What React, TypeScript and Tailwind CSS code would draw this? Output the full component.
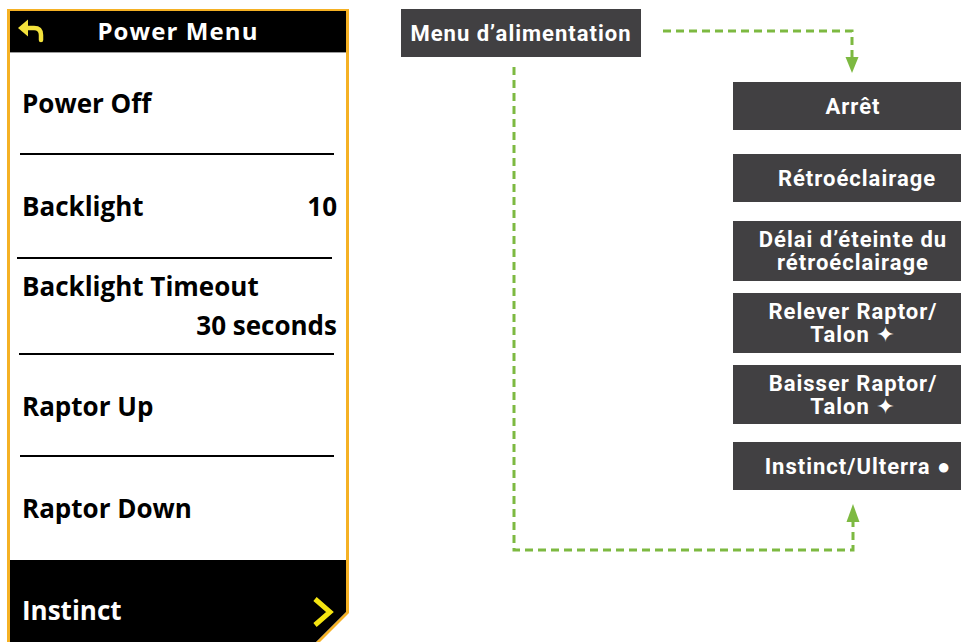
import React from 'react';

const panelFont = { fontFamily: '"Open Sans", "Noto Sans", sans-serif' };

const BackArrow = () => (
  <svg width="30" height="24" viewBox="0 0 30 24" className="block">
    <path d="M9 9 H17 Q24 9 24 16 V21" fill="none" stroke="#f3e23c" strokeWidth="4.5" strokeLinecap="round" />
    <polygon points="1,9 11,0.5 11,17.5" fill="#f3e23c" />
  </svg>
);

const Chevron = () => (
  <svg width="24" height="32" viewBox="0 0 24 32" className="block">
    <polyline points="4,3 19,16 4,29" fill="none" stroke="#f4e411" strokeWidth="5" strokeLinejoin="miter" />
  </svg>
);

const Divider = ({ cls }: { cls: string }) => <div className={`h-[2px] bg-black shrink-0 ${cls}`} />;

const PowerMenu = () => (
  <div
    className="shrink-0 ml-[7px] mt-[9px] w-[342px] h-[651px] bg-[#f5b124] pt-[2px] px-[3px] pb-[3px] [clip-path:polygon(0_0,100%_0,100%_calc(100%-47px),calc(100%-47px)_100%,0_100%)]"
    style={panelFont}
  >
    <div className="h-full bg-white flex flex-col [clip-path:polygon(0_0,100%_0,100%_calc(100%-45px),calc(100%-45px)_100%,0_100%)]">
      <div className="h-[42px] bg-black border-b border-[#9c9c9c] flex items-center relative shrink-0">
        <div className="absolute left-[7px] top-[8px]">
          <BackArrow />
        </div>
        <div className="flex-1 text-center text-white font-bold text-[24px] tracking-[1.1px] pb-[1px]">Power Menu</div>
      </div>

      <div className="h-[100px] flex items-center pl-[12px] text-[26px] font-bold text-black shrink-0">Power Off</div>
      <Divider cls="ml-[10px] mr-[12px]" />

      <div className="h-[102px] flex items-center justify-between pl-[12px] pr-[9px] text-[26px] font-bold text-black shrink-0">
        <span>Backlight</span>
        <span>10</span>
      </div>
      <Divider cls="ml-[7px] mr-[14px]" />

      <div className="h-[94px] flex flex-col justify-center pl-[12px] pr-[9px] text-[26px] font-bold text-black leading-[39px] shrink-0">
        <span>Backlight Timeout</span>
        <span className="text-right">30 seconds</span>
      </div>
      <Divider cls="ml-[9px] mr-[12px]" />

      <div className="h-[100px] flex items-center pl-[12px] text-[26px] font-bold text-black shrink-0 pt-[3px]">Raptor Up</div>
      <Divider cls="ml-[10px] mr-[12px]" />

      <div className="h-[103px] flex items-center pl-[12px] text-[26px] font-bold text-black shrink-0">Raptor Down</div>

      <div className="flex-1 bg-black flex items-start pt-[31px] justify-between pl-[12px] pr-[11px]">
        <span className="text-white text-[26px] font-bold">Instinct</span>
        <div className="mt-[5px]">
          <Chevron />
        </div>
      </div>
    </div>
  </div>
);

const boxCls =
  'w-[240px] shrink-0 bg-[#414042] text-white font-bold text-[22px] tracking-[1px] leading-[23px] flex items-center justify-center text-center';

const diagramFont = { fontFamily: 'Roboto, "Liberation Sans", "DejaVu Sans", sans-serif' };

const Connectors = () => (
  <svg className="absolute left-0 top-0 pointer-events-none" width="961" height="642" viewBox="0 0 961 642">
    <g fill="none" stroke="#7db941" strokeWidth="3" strokeDasharray="8 5">
      <path d="M663 31 H852 V58" />
      <path d="M514 67 V550 H853 V521" />
    </g>
    <polygon points="845.5,57 858.5,57 852,73" fill="#7db941" />
    <polygon points="846.5,522 859.5,522 853,504" fill="#7db941" />
  </svg>
);

export default function App() {
  return (
    <div className="relative w-[961px] h-[642px] overflow-hidden bg-white flex items-start">
      <PowerMenu />

      <div className="shrink-0 ml-[52px] mt-[9px]" style={diagramFont}>
        <div className={`${boxCls} h-[48px]`}>Menu d’alimentation</div>
      </div>

      <div className="shrink-0 ml-[92px] mt-[82px] flex flex-col" style={diagramFont}>
        <div className={`${boxCls} h-[48px]`}>Arrêt</div>
        <div className={`${boxCls} h-[48px] mt-[24px] pl-[8px]`}>Rétroéclairage</div>
        <div className={`${boxCls} h-[60px] mt-[19px]`}>
          Délai d’éteinte du
          <br />
          rétroéclairage
        </div>
        <div className={`${boxCls} h-[60px] mt-[12px]`}>
          Relever Raptor/
          <br />
          Talon ✦
        </div>
        <div className={`${boxCls} h-[59px] mt-[12px]`}>
          Baisser Raptor/
          <br />
          Talon ✦
        </div>
        <div className={`${boxCls} h-[48px] mt-[18px] pl-[10px]`}>Instinct/Ulterra ●</div>
      </div>

      <Connectors />
    </div>
  );
}
